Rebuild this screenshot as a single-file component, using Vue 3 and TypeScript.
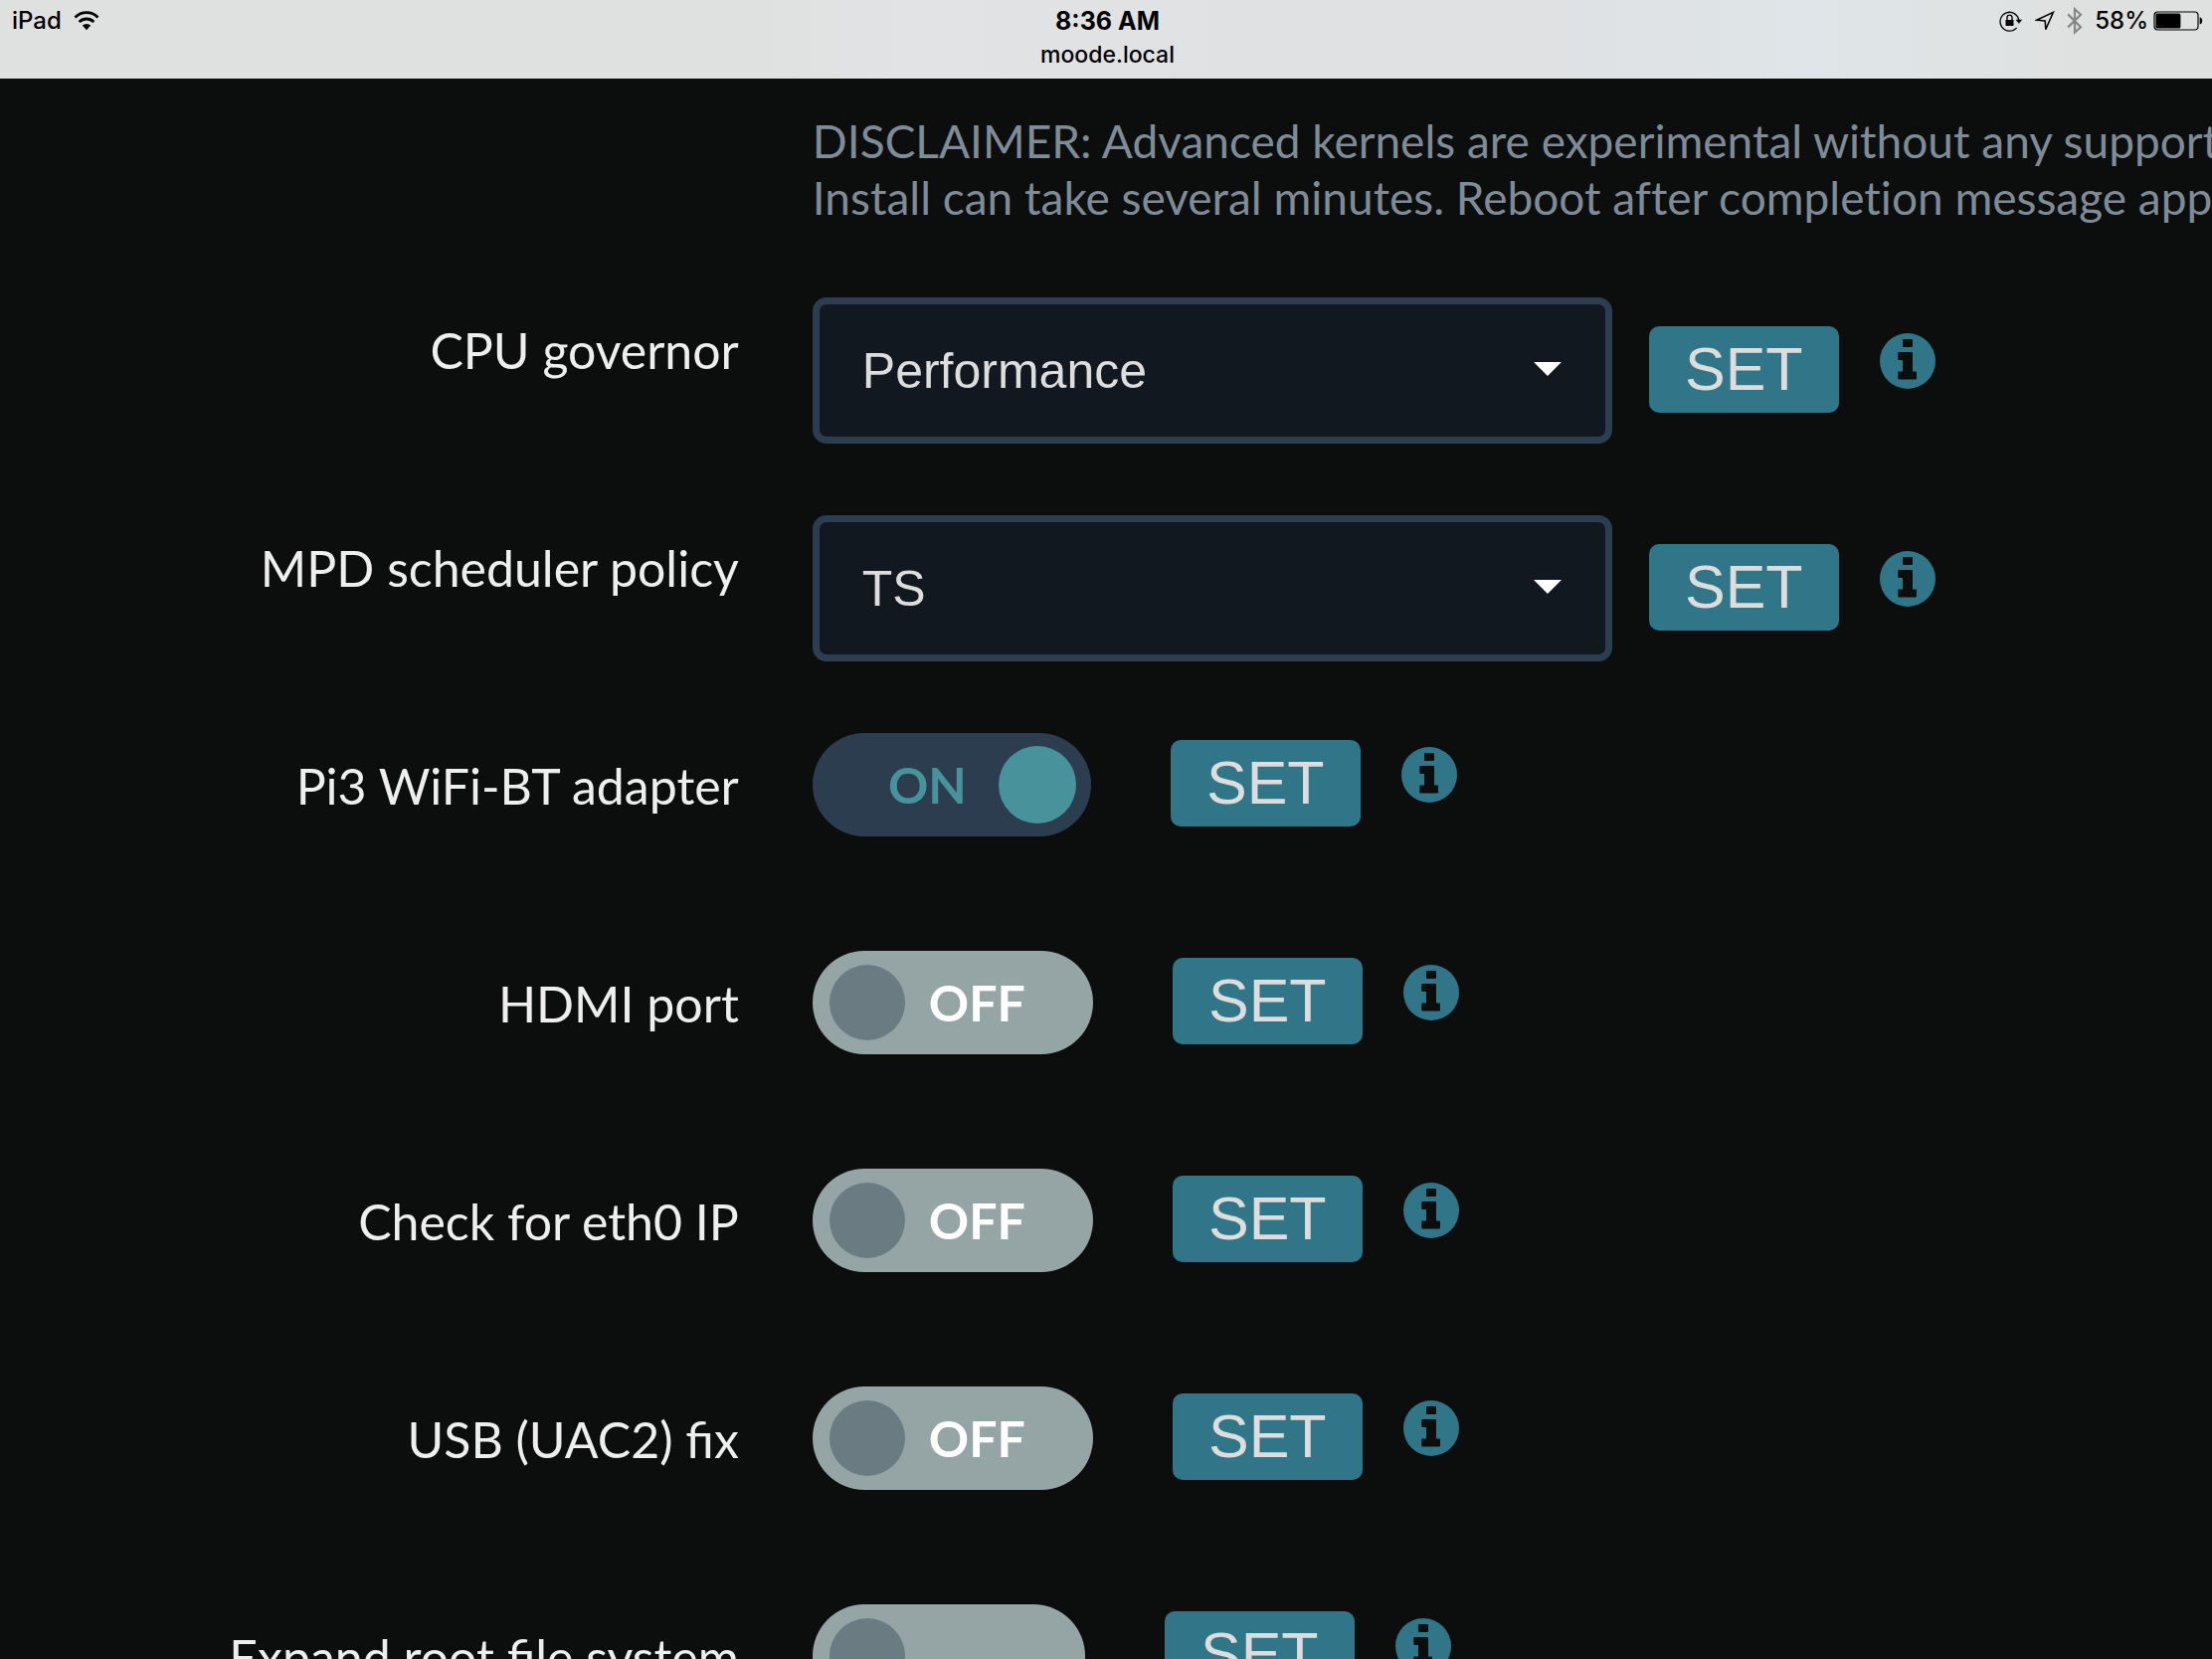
<script setup lang="ts">
import { reactive } from 'vue'

interface SelectSetting {
  kind: 'select'
  id: string
  label: string
  value: string
  options: string[]
}

interface ToggleSetting {
  kind: 'toggle'
  id: string
  label: string
  on: boolean
  onText: string
  offText: string
}

type Setting = SelectSetting | ToggleSetting

const settings = reactive<Setting[]>([
  { kind: 'select', id: 'cpugov', label: 'CPU governor', value: 'Performance', options: ['Performance'] },
  { kind: 'select', id: 'mpdsched', label: 'MPD scheduler policy', value: 'TS', options: ['TS'] },
  { kind: 'toggle', id: 'p3wifi', label: 'Pi3 WiFi-BT adapter', on: true, onText: 'ON', offText: 'OFF' },
  { kind: 'toggle', id: 'hdmiport', label: 'HDMI port', on: false, onText: 'ON', offText: 'OFF' },
  { kind: 'toggle', id: 'eth0chk', label: 'Check for eth0 IP', on: false, onText: 'ON', offText: 'OFF' },
  { kind: 'toggle', id: 'uac2fix', label: 'USB (UAC2) fix', on: false, onText: 'ON', offText: 'OFF' },
  { kind: 'toggle', id: 'expandroot', label: 'Expand root file system', on: false, onText: '', offText: '' },
])
</script>

<template>
  <div class="screen">
    <header class="status">
      <div class="status-side">
        <span class="device">iPad</span>
        <svg class="wifi" width="26" height="20" viewBox="0 0 26 20" aria-hidden="true">
          <path d="M1.5 6.4a16.3 16.3 0 0 1 23 0" fill="none" stroke="#000" stroke-width="2.8" />
          <path d="M5.6 11a10.6 10.6 0 0 1 14.8 0" fill="none" stroke="#000" stroke-width="2.8" />
          <path d="M8.8 14.6a6 6 0 0 1 8.4 0L13 19.2z" fill="#000" />
        </svg>
      </div>
      <div class="status-center">
        <span class="time">8:36 AM</span>
        <span class="host">moode.local</span>
      </div>
      <div class="status-side end">
        <svg width="24" height="22" viewBox="0 0 24 22" aria-hidden="true">
          <path d="M17.6 17.8A9.4 9.4 0 1 1 19.8 11" fill="none" stroke="#000" stroke-width="1.3" />
          <path d="M16.6 9.8h6.6l-3.3 4z" />
          <path d="M6.5 10h8v6h-8z" />
          <path d="M8 10V7.6a2.5 2.5 0 0 1 5 0V10" fill="none" stroke="#000" stroke-width="1.4" />
        </svg>
        <svg class="location" width="20" height="21" viewBox="0 0 20 21" aria-hidden="true">
          <path d="M1.6 9.2L18.4 1.4l-7.6 17.2-.6-8.6z" fill="none" stroke="#000" stroke-width="1.5" />
        </svg>
        <svg class="bluetooth" width="16" height="28" viewBox="0 0 16 28" aria-hidden="true">
          <path d="M1.2 7.4L14 20.2 8 25.6V2.2l6 5.6L1.2 20.4" fill="none" stroke="#868787" stroke-width="2.2" />
        </svg>
        <span class="percent">58%</span>
        <svg class="battery" width="50" height="20" viewBox="0 0 50 20" aria-hidden="true">
          <rect x="1" y="1" width="44" height="18" rx="3.5" fill="none" stroke="#000" stroke-width="1.2" />
          <rect x="2.4" y="2.4" width="25" height="15.2" rx="1.5" />
          <path d="M46.6 6.6c1.8.2 2.6 1.6 2.6 3.4s-.8 3.2-2.6 3.4z" />
        </svg>
      </div>
    </header>

    <main class="settings">
      <p class="disclaimer">
        DISCLAIMER: Advanced kernels are experimental without any support.<br />
        Install can take several minutes. Reboot after completion message appears.
      </p>

      <div v-for="s in settings" :key="s.id" class="row">
        <label class="row-label" :for="s.id">{{ s.label }}</label>
        <div class="controls" :class="s.kind">
          <div v-if="s.kind === 'select'" class="picker">
            <select :id="s.id" v-model="s.value">
              <option v-for="o in s.options" :key="o">{{ o }}</option>
            </select>
            <svg class="caret" width="28" height="14" viewBox="0 0 28 14" aria-hidden="true">
              <path d="M0 0h28L14 14z" fill="#fff" />
            </svg>
          </div>
          <label v-else class="toggle" :class="{ on: s.on }">
            <input :id="s.id" v-model="s.on" type="checkbox" role="switch" />
            <span class="knob"></span>
            <span class="toggle-text">{{ s.on ? s.onText : s.offText }}</span>
          </label>
          <div class="actions">
            <button type="button" class="set">SET</button>
            <button type="button" class="info" :aria-label="'About ' + s.label">
              <svg width="56" height="56" viewBox="0 0 56 56" aria-hidden="true">
                <circle cx="28" cy="28" r="28" fill="#307588" />
                <rect x="23" y="6" width="10" height="8" rx="1" fill="#0c0e0d" />
                <path
                  d="M19.3 19H32a1 1 0 0 1 1 1v18.4h3a1 1 0 0 1 1 1v6a1 1 0 0 1-1 1H19.3a1 1 0 0 1-1-1v-6a1 1 0 0 1 1-1H23V27h-3.7a1 1 0 0 1-1-1v-6a1 1 0 0 1 1-1z"
                  fill="#0c0e0d"
                />
              </svg>
            </button>
          </div>
        </div>
      </div>
    </main>
  </div>
</template>

<style>
body {
  margin: 0;
  background: #0c0e0d;
}
</style>

<style scoped>
.screen {
  display: flex;
  flex-direction: column;
  height: 100vh;
  overflow: hidden;
  background: #0c0e0d;
  font-family: Lato, 'Liberation Sans', sans-serif;
}

.status {
  flex: none;
  display: grid;
  grid-template-columns: 1fr auto 1fr;
  box-sizing: border-box;
  height: 79px;
  padding: 4px 9px 0 12px;
  background: linear-gradient(90deg, #dfe1e0 0%, #dfe1e0 34%, #e2e3e5 42%, #e0e1e3 55%, #dfe1e3 70%, #dfe5e8 82%, #dfe1e0 94%);
  color: #000;
  font-family: Inter, 'Liberation Sans', sans-serif;
  font-size: 24px;
  line-height: 34px;
}

.status-side {
  display: flex;
  align-items: center;
  height: 34px;
}

.status-side.end {
  justify-content: flex-end;
}

.device,
.percent {
  font-weight: 500;
}

.wifi,
.location,
.bluetooth,
.percent {
  margin-left: 12px;
}

.battery {
  margin-left: 5px;
}

.status-center {
  display: flex;
  flex-direction: column;
  align-items: center;
}

.time {
  font-size: 25px;
  font-weight: 700;
}

.host {
  font-size: 23px;
  font-weight: 500;
}

.settings {
  flex: 1;
  min-height: 0;
  display: flex;
  flex-direction: column;
  gap: 72px;
  padding-top: 34px;
  overflow: hidden;
}

.disclaimer {
  flex: none;
  margin: 0;
  padding-left: calc(33.4% + 74px);
  color: #7f8b97;
  font-size: 46px;
  font-variant-ligatures: none;
  line-height: 57px;
  white-space: nowrap;
}

.row {
  flex: none;
  display: grid;
  grid-template-columns: 33.4% 1fr;
  column-gap: 74px;
  height: 147px;
}

.row-label {
  color: #eee;
  font-size: 50px;
  line-height: 107px;
  text-align: right;
  white-space: nowrap;
}

.controls {
  display: flex;
  align-items: flex-start;
}

.controls.select {
  gap: 37px;
}

.controls.toggle {
  gap: 80px;
}

.actions {
  display: flex;
  align-items: flex-start;
  gap: 41px;
}

.select .actions {
  padding-top: 29px;
}

.toggle .actions {
  padding-top: 7px;
}

.picker {
  position: relative;
  width: 804px;
}

.picker select {
  appearance: none;
  display: block;
  box-sizing: border-box;
  width: 100%;
  height: 147px;
  padding: 0 90px 0 43px;
  border: 7px solid #2d3d50;
  border-radius: 14px;
  background: #111820;
  color: #ddd;
  font-family: 'Liberation Sans', Arial, sans-serif;
  font-size: 50px;
}

.caret {
  position: absolute;
  top: 65px;
  right: 51px;
  pointer-events: none;
}

label.toggle {
  position: relative;
  display: flex;
  align-items: center;
  gap: 24px;
  box-sizing: border-box;
  width: 282px;
  height: 104px;
  padding: 0 17px;
  border-radius: 52px;
  background: #95a5a5;
  color: #fff;
  font-size: 50px;
  font-weight: 700;
}

label.toggle:has(.toggle-text:empty) {
  width: 274px;
}

label.toggle input {
  position: absolute;
  inset: 0;
  width: 100%;
  height: 100%;
  margin: 0;
  opacity: 0;
}

.knob {
  width: 76px;
  height: 76px;
  border-radius: 50%;
  background: #6b7b82;
}

label.toggle.on {
  flex-direction: row-reverse;
  gap: 32px;
  width: 280px;
  padding: 0 15px;
  background: #2d3d50;
  color: #48929b;
}

.on .knob {
  width: 78px;
  height: 78px;
  background: #48929b;
}

.set {
  width: 191px;
  height: 87px;
  padding: 0;
  border: 0;
  border-radius: 10px;
  background: #307588;
  color: #ddd;
  font-family: 'Liberation Sans', Arial, sans-serif;
  font-size: 61px;
  line-height: 87px;
}

.info {
  display: flex;
  margin-top: 7px;
  padding: 0;
  border: 0;
  background: none;
}
</style>
